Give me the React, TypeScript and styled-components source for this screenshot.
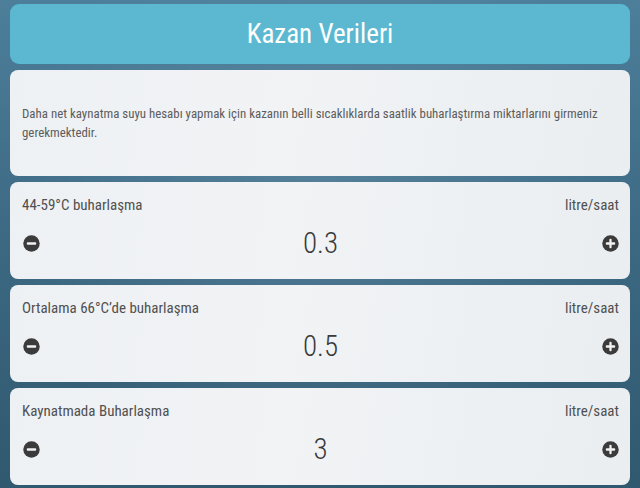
import React from 'react'
import styled, { createGlobalStyle } from 'styled-components'

const GlobalStyle = createGlobalStyle`
  html, body {
    margin: 0;
    padding: 0;
    width: 640px;
    height: 488px;
    overflow: hidden;
  }
  body {
    font-family: 'Roboto Condensed', 'Liberation Sans Narrow', Roboto, sans-serif;
    font-stretch: condensed;
    background: #3e6b86;
  }
`

const Page = styled.div`
  width: 640px;
  height: 488px;
  box-sizing: border-box;
  padding: 4px 10px 0;
  display: flex;
  flex-direction: column;
  gap: 6px;
  background:
    radial-gradient(ellipse at 50% 40%, rgba(120, 160, 185, 0.35), rgba(0, 0, 0, 0) 70%),
    linear-gradient(180deg, #4d7f9a 0%, #3c6882 50%, #30596f 100%);
`

const Header = styled.div`
  height: 60px;
  flex: none;
  border-radius: 9px;
  background: #5bb8d0;
  display: flex;
  align-items: center;
  justify-content: center;
  color: #fff;
  font-size: 27px;
  font-weight: 400;
`

const Card = styled.div<{ $height: number }>`
  height: ${p => p.$height}px;
  flex: none;
  box-sizing: border-box;
  border-radius: 8px;
  background: linear-gradient(100deg, #eef1f4 0%, #f1f3f5 45%, #eaeef1 100%);
  color: #4a4a4a;
`

const InfoCard = styled(Card)`
  display: flex;
  align-items: center;
  padding: 0 12px;
  font-size: 12.9px;
  font-weight: 400;
  line-height: 19px;
  color: #5c5c5c;
`

const ValueCard = styled(Card)`
  padding: 14px 11px 0 12px;
  display: flex;
  flex-direction: column;
`

const TopRow = styled.div`
  display: flex;
  justify-content: space-between;
  font-size: 15px;
  font-weight: 400;
  line-height: 18px;
  color: #505050;
`

const StepRow = styled.div`
  margin-top: 14px;
  display: grid;
  grid-template-columns: 30px 1fr 30px;
  align-items: center;
`

const Value = styled.div`
  text-align: center;
  font-size: 29px;
  font-weight: 300;
  color: #3a3a3a;
  line-height: 30px;
`

const StepButton = styled.button<{ $side: 'left' | 'right' }>`
  border: 0;
  padding: 0;
  background: none;
  width: 17px;
  height: 17px;
  justify-self: ${p => (p.$side === 'left' ? 'start' : 'end')};
  margin-left: ${p => (p.$side === 'left' ? '1px' : '0')};
  display: flex;
`

const Minus = () => (
  <svg width="17" height="17" viewBox="0 0 18 18">
    <circle cx="9" cy="9" r="8.7" fill="#3b3b3b" />
    <rect x="4" y="7.7" width="10" height="2.6" rx="1" fill="#f2f2f2" />
  </svg>
)

const Plus = () => (
  <svg width="17" height="17" viewBox="0 0 18 18">
    <circle cx="9" cy="9" r="8.7" fill="#3b3b3b" />
    <rect x="4" y="7.8" width="10" height="2.4" rx="1" fill="#f2f2f2" />
    <rect x="7.8" y="4" width="2.4" height="10" rx="1" fill="#f2f2f2" />
  </svg>
)

const fields = [
  { label: '44-59°C buharlaşma', value: '0.3' },
  { label: 'Ortalama 66°C\u2019de buharlaşma', value: '0.5' },
  { label: 'Kaynatmada Buharlaşma', value: '3' }
]

export default function App() {
  return (
    <>
      <GlobalStyle />
      <Page>
        <Header>Kazan Verileri</Header>
        <InfoCard $height={106}>
          Daha net kaynatma suyu hesabı yapmak için kazanın belli sıcaklıklarda saatlik buharlaştırma miktarlarını girmeniz
          gerekmektedir.
        </InfoCard>
        {fields.map(f => (
          <ValueCard key={f.label} $height={97}>
            <TopRow>
              <span>{f.label}</span>
              <span>litre/saat</span>
            </TopRow>
            <StepRow>
              <StepButton $side="left">
                <Minus />
              </StepButton>
              <Value>{f.value}</Value>
              <StepButton $side="right">
                <Plus />
              </StepButton>
            </StepRow>
          </ValueCard>
        ))}
      </Page>
    </>
  )
}
